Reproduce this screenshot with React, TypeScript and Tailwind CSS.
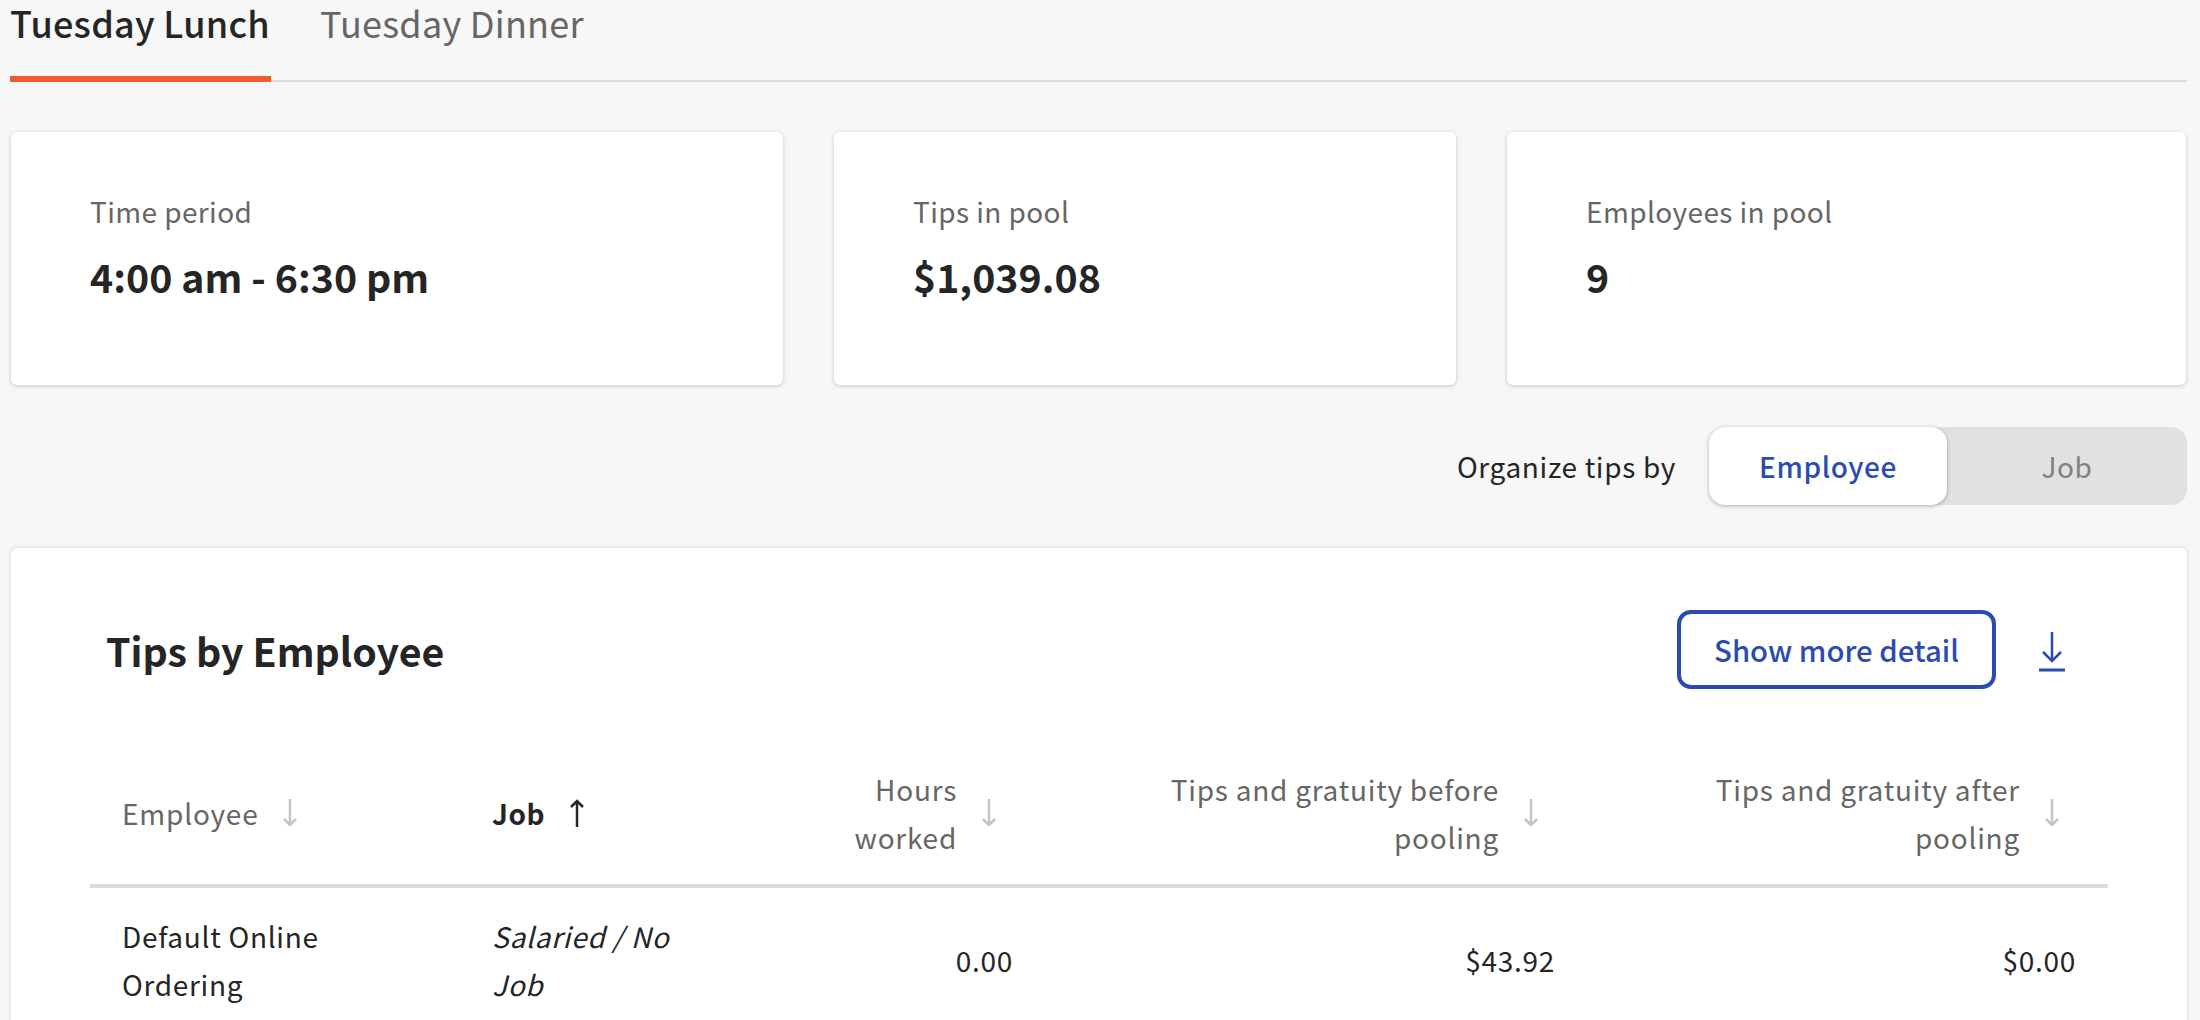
import React from "react";

const font = { fontFamily: '"Noto Sans CJK SC", "Noto Sans", sans-serif' };

const SortArrow: React.FC<{ up?: boolean; active?: boolean }> = ({ up, active }) => (
  <svg
    width="16"
    height="28"
    viewBox="0 0 16 28"
    fill="none"
    strokeWidth="2.5"
    stroke={active ? "#252525" : "#c4c4c4"}
    className={`shrink-0 ${up ? "rotate-180" : ""}`}
  >
    <path d="M8 0V26M2 20L8 26L14 20" />
  </svg>
);

const StatCard: React.FC<{ label: string; value: string; className: string }> = ({ label, value, className }) => (
  <div className={`h-[253px] rounded-[6px] bg-white pl-[79px] pt-[61px] shadow-[0_1px_4px_rgba(0,0,0,0.2)] ${className}`}>
    <div className="text-[28px] leading-[36px] tracking-[0.4px] text-[#666]">{label}</div>
    <div className="mt-[19px] text-[39.3px] font-bold leading-[56px] text-[#252525]">{value}</div>
  </div>
);

const HeaderCell: React.FC<{ children: React.ReactNode; textWidth: string }> = ({ children, textWidth }) => (
  <div className="flex items-center justify-end pr-[47px]">
    <span className={`text-right text-[28px] leading-[48px] tracking-[0.75px] text-[#666] ${textWidth}`}>{children}</span>
    <span className="ml-6">
      <SortArrow />
    </span>
  </div>
);

export default function App() {
  return (
    <div className="h-[1020px] w-[2200px] overflow-hidden bg-[#f7f7f7] pl-[11px] pr-[13px]" style={font}>
      {/* tabs */}
      <div className="-ml-px flex h-[82px] border-b-2 border-[#ddd]">
        <div className="-mb-[2px] h-[82px] w-[261px] whitespace-nowrap border-b-[6px] border-[#f15a29] text-[36px] font-medium leading-[44px] tracking-[0.25px] text-[#252525]">
          Tuesday Lunch
        </div>
        <div className="ml-[49px] text-[36px] leading-[44px] tracking-[0.25px] text-[#666]">Tuesday Dinner</div>
      </div>

      {/* stats */}
      <div className="mt-[50px] flex gap-[51px]">
        <StatCard className="w-[772px]" label="Time period" value="4:00 am - 6:30 pm" />
        <StatCard className="w-[622px]" label="Tips in pool" value="$1,039.08" />
        <StatCard className="w-[679px]" label="Employees in pool" value="9" />
      </div>

      {/* organize toggle */}
      <div className="mt-[42px] flex items-center justify-end">
        <span className="mr-[33px] text-[28px] leading-[40px] tracking-[0.65px] text-[#252525]">Organize tips by</span>
        <div className="flex h-[78px] w-[478px] rounded-[16px] bg-[#e1e1e1]">
          <div className="flex w-[238px] items-center justify-center rounded-[16px] bg-white text-[28px] font-medium tracking-[0.6px] text-[#2b4bb0] shadow-[0_1px_4px_rgba(0,0,0,0.3)]">
            Employee
          </div>
          <div className="flex flex-1 items-center justify-center text-[28px] tracking-[0.6px] text-[#808080]">Job</div>
        </div>
      </div>

      {/* tips table card */}
      <div className="mt-[43px] h-[600px] rounded-[6px] bg-white px-[79px] pt-[62px] shadow-[0_0_4px_rgba(0,0,0,0.15)]">
        <div className="flex h-[79px] items-center justify-between">
          <h2 className="pl-[16px] text-[39.3px] font-bold leading-[56px] text-[#252525]">Tips by Employee</h2>
          <div className="flex items-center pr-[42px]">
            <button className="flex h-[79px] w-[319px] items-center justify-center rounded-[14px] border-[4px] border-[#2b4bb0] bg-white text-[29.3px] font-medium text-[#2b4bb0]">
              Show more detail
            </button>
            <svg width="28" height="42" viewBox="0 0 28 42" fill="none" stroke="#2b4bb0" className="ml-[42px] mt-[4px]">
              <path d="M14 1V30M5 21L14 30L23 21" strokeWidth="2.5" />
              <path d="M1 39H27" strokeWidth="3" />
            </svg>
          </div>
        </div>

        <div className="mt-[56px] grid h-[143px] grid-cols-[370px_260px_324px_542px_521px] items-center border-b-[4px] border-[#ddd] pb-[3px]">
          <div className="flex items-center pl-8">
            <span className="text-[28px] leading-[48px] tracking-[0.8px] text-[#666]">Employee</span>
            <span className="ml-[23px]">
              <SortArrow />
            </span>
          </div>
          <div className="flex items-center pl-8">
            <span className="text-[28px] font-bold leading-[48px] tracking-[0.5px] text-[#252525]">Job</span>
            <span className="ml-[24px]">
              <SortArrow up active />
            </span>
          </div>
          <HeaderCell textWidth="w-[110px]">Hours worked</HeaderCell>
          <HeaderCell textWidth="w-[360px]">Tips and gratuity before pooling</HeaderCell>
          <HeaderCell textWidth="w-[340px]">Tips and gratuity after pooling</HeaderCell>
        </div>

        <div className="grid grid-cols-[370px_260px_324px_542px_521px] items-center pt-[24px] text-[28px] leading-[48px] tracking-[0.7px] text-[#252525]">
          <div className="px-8">Default Online Ordering</div>
          <div className="px-8 italic">Salaried / No Job</div>
          <div className="pr-[31px] text-right">0.00</div>
          <div className="pr-[31px] text-right">$43.92</div>
          <div className="pr-[31px] text-right">$0.00</div>
        </div>
      </div>
    </div>
  );
}
